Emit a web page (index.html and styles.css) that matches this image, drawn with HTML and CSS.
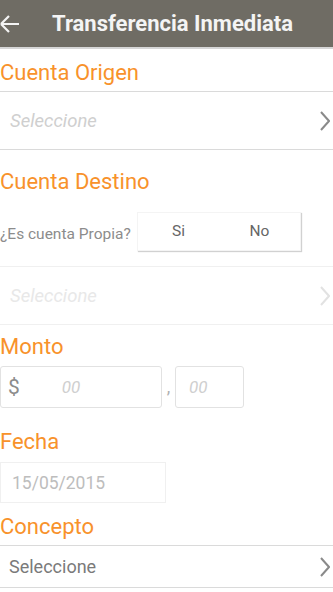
FILE: index.html
```html
<!DOCTYPE html>
<html>
<head>
<meta charset="UTF-8">
<link rel="stylesheet" href="styles.css">
</head>
<body>
<header class="topbar">
  <svg class="back" width="20" height="20" viewBox="0 0 20 20">
    <path d="M1 10H19M1 10L9 2M1 10L9 18" fill="none" stroke="#f4f4f4" stroke-width="2.2"/>
  </svg>
  <h1 class="title">Transferencia Inmediata</h1>
</header>

<main class="form">
  <h2 class="field-label origen">Cuenta Origen</h2>
  <div class="select-row tall">
    <span class="placeholder">Seleccione</span>
    <svg class="chevron" width="10" height="20" viewBox="0 0 10 20">
      <path d="M1 1L9 10L1 19" fill="none" stroke="#8a8a8a" stroke-width="2"/>
    </svg>
  </div>

  <h2 class="field-label destino">Cuenta Destino</h2>
  <div class="own-row">
    <span class="question">¿Es cuenta Propia?</span>
    <div class="toggle">
      <span class="toggle-opt">Si</span>
      <span class="toggle-opt">No</span>
    </div>
  </div>
  <div class="select-row tall disabled">
    <span class="placeholder">Seleccione</span>
    <svg class="chevron" width="10" height="20" viewBox="0 0 10 20">
      <path d="M1 1L9 10L1 19" fill="none" stroke="#e2e2e2" stroke-width="2"/>
    </svg>
  </div>

  <h2 class="field-label monto">Monto</h2>
  <div class="amount-row">
    <div class="amount-box whole">
      <span class="currency">$</span>
      <span class="amount-ph">00</span>
    </div>
    <span class="comma">,</span>
    <div class="amount-box cents">
      <span class="amount-ph">00</span>
    </div>
  </div>

  <h2 class="field-label fecha">Fecha</h2>
  <div class="date-box">15/05/2015</div>

  <h2 class="field-label concepto">Concepto</h2>
  <div class="select-row short">
    <span class="value">Seleccione</span>
    <svg class="chevron" width="10" height="20" viewBox="0 0 10 20">
      <path d="M1 1L9 10L1 19" fill="none" stroke="#8a8a8a" stroke-width="2"/>
    </svg>
  </div>
</main>
</body>
</html>
```

FILE: styles.css
```css
:root {
  --header: #6f6c64;
  --orange: #f8922b;
  --line: #dadada;
  --line-light: #f0f0f0;
  --text: #7a7a7a;
  --placeholder: #cfcfcf;
}

* {
  box-sizing: border-box;
  margin: 0;
  padding: 0;
}

body {
  width: 333px;
  font-family: Roboto, "Noto Sans", sans-serif;
  background: #ffffff;
  overflow: hidden;
}

.topbar {
  height: 49px;
  background: var(--header);
  border-bottom: 2px solid #d6d6d6;
  display: flex;
  align-items: center;
  gap: 32px;
}

.back {
  flex: none;
  margin-top: 1px;
}

.title {
  font-size: 22px;
  font-weight: 700;
  color: #f4f4f4;
  line-height: 26px;
}

.field-label {
  font-size: 22px;
  font-weight: 400;
  line-height: 24px;
  color: var(--orange);
}

.field-label.origen { margin: 12px 0 6px; }
.field-label.destino { margin-top: 20px; }
.field-label.monto { margin-top: 10px; }
.field-label.fecha { margin-top: 22px; }
.field-label.concepto { margin: 12px 0 6px; }

.select-row {
  display: flex;
  align-items: center;
  justify-content: space-between;
  padding: 0 3px 0 10px;
  border-top: 1px solid var(--line);
  border-bottom: 1px solid var(--line);
}

.select-row.tall {
  height: 59px;
}

.select-row.short {
  height: 43px;
  padding-left: 9px;
}

.select-row.disabled {
  border-color: var(--line-light);
}

.placeholder {
  font-size: 18.5px;
  font-style: italic;
  color: var(--placeholder);
}

.disabled .placeholder {
  color: #e8e8e8;
}

.value {
  font-size: 18px;
  color: var(--text);
}

.own-row {
  display: flex;
  align-items: center;
  margin: 18px 0 15px;
  height: 39px;
}

.question {
  width: 137px;
  font-size: 15.5px;
  color: #8c8c8c;
  padding-top: 5px;
}

.toggle {
  display: flex;
  width: 164px;
  height: 39px;
  border: 1px solid #f4f4f4;
  box-shadow: 1px 1px 1px rgba(0, 0, 0, 0.18);
}

.toggle-opt {
  flex: 1;
  display: flex;
  align-items: center;
  justify-content: center;
  font-size: 15.5px;
  color: #666666;
  padding-bottom: 2px;
}

.amount-row {
  display: flex;
  margin-top: 7px;
  height: 42px;
}

.amount-box {
  height: 42px;
  border: 1.5px solid #e2e2e2;
  border-radius: 3px;
  display: flex;
  align-items: center;
}

.amount-box.whole {
  width: 162px;
  padding-left: 7px;
}

.amount-box.cents {
  width: 69px;
  padding-left: 13px;
}

.currency {
  font-size: 21px;
  color: #8c8c8c;
}

.amount-ph {
  font-size: 17px;
  font-style: italic;
  color: var(--placeholder);
}

.whole .amount-ph {
  margin-left: 42px;
}

.comma {
  width: 13px;
  text-align: center;
  font-size: 18px;
  color: #b0b0b0;
  padding-top: 10px;
}

.date-box {
  width: 166px;
  height: 41px;
  margin-top: 8px;
  border: 1px solid var(--line-light);
  padding-left: 11px;
  display: flex;
  align-items: center;
  font-size: 17.5px;
  color: #bdbdbd;
}
```
